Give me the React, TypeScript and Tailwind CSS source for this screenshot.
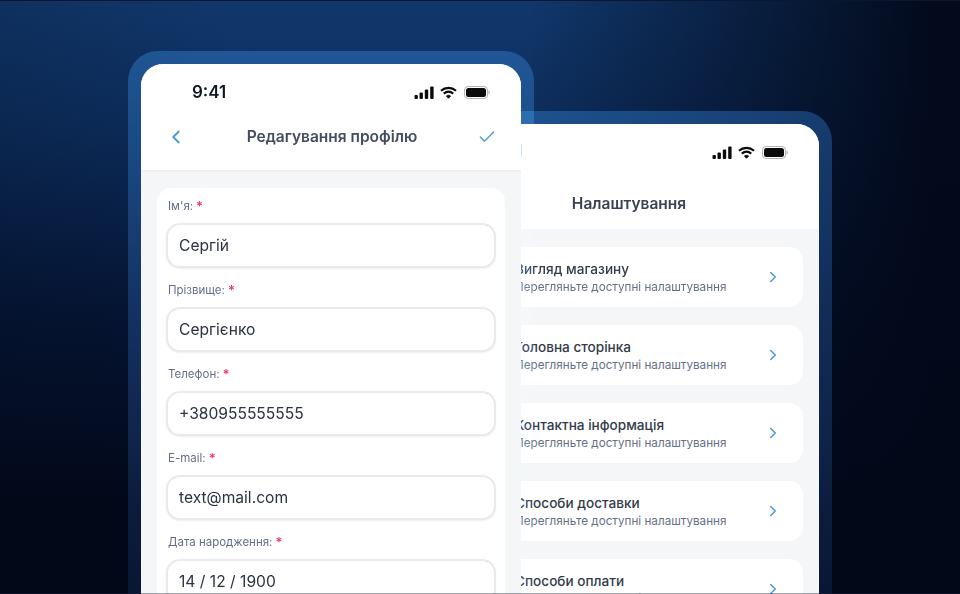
import { ChevronLeft, ChevronRight, Check } from "lucide-react";

const font = "font-['Inter','Liberation_Sans',sans-serif]";

function StatusIcons() {
  return (
    <div className="flex items-center gap-[6px]">
      <svg width="20" height="13" viewBox="0 0 20 13" fill="#0b0b0b">
        <rect x="0.500" y="9" width="3.400" height="4" rx="1" />
        <rect x="5.500" y="6.500" width="3.400" height="6.500" rx="1" />
        <rect x="10.800" y="3.500" width="3.400" height="9.500" rx="1" />
        <rect x="16.200" y="0.500" width="3.400" height="12.500" rx="1" />
      </svg>
      <svg width="17" height="13" viewBox="0 0 18 13" fill="none" stroke="#0b0b0b" strokeWidth="2.300">
        <path d="M1 4.600C5.600.6 12.400.6 17 4.600" />
        <path d="M4 7.700c3-2.500 7-2.500 10 0" />
        <path d="M9 12.600 6.800 10.200c1.300-1 3.100-1 4.400 0Z" fill="#0b0b0b" strokeWidth="1" />
      </svg>
      <svg className="ml-[1px]" width="26" height="13" viewBox="0 0 26 13" fill="none">
        <rect x="0.500" y="0.500" width="23" height="12" rx="3.500" stroke="#0b0b0b" strokeOpacity="0.3" />
        <rect x="2" y="2" width="20" height="9" rx="2.500" fill="#0b0b0b" />
        <path d="M24.500 4.500v4c.8-.3 1.300-1.100 1.300-2s-.5-1.700-1.300-2Z" fill="#0b0b0b" fillOpacity="0.35" />
      </svg>
    </div>
  );
}

function Field({ label, value }: { label: string; value: string }) {
  return (
    <div className="h-[84px]">
      <div className="flex h-[22px] items-center pl-[2px] text-[11.500px] text-[#667085]">
        {label}
        <span className="ml-[3px] text-[13px] font-semibold text-[#e8386a]">*</span>
      </div>
      <div className="mt-[5px] flex h-[45px] items-center rounded-[14px] border-2 border-[#e8eaee] bg-white pl-[11px] text-[15.600px] text-[#2b3240] shadow-[0_1px_2px_rgba(16,24,40,0.07)]">
        {value}
      </div>
    </div>
  );
}

function SettingsRow({ title }: { title: string }) {
  return (
    <div className="flex h-[60px] items-center justify-between rounded-[14px] bg-white pl-[62px] pr-[21px]">
      <div>
        <div className="text-[13.600px] leading-[18px] font-medium text-[#333b4a]">{title}</div>
        <div className="mt-[1px] text-[11.700px] leading-[16px] text-[#667085]">Перегляньте доступні налаштування</div>
      </div>
      <ChevronRight className="h-[18px] w-[18px] text-[#4a9ad0]" strokeWidth={2} />
    </div>
  );
}

function Frame() {
  return (
    <div className="absolute inset-0 rounded-[30px] bg-[linear-gradient(180deg,#122c50_0%,#0f2442_30%,#0b1b32_60%,#050a14_100%)] mix-blend-screen" />
  );
}

export default function App() {
  return (
    <div className={`relative h-[594px] w-[960px] overflow-hidden bg-[#020818] ${font}`}>
      <div className="absolute inset-0 bg-[linear-gradient(180deg,#11386c_0%,#0c2c5a_22%,#051534_52%,#020818_85%)]" />
      <div className="absolute inset-0 bg-[linear-gradient(90deg,rgba(2,8,24,0.15)_0%,rgba(2,8,24,0)_25%,rgba(2,8,24,0)_55%,rgba(2,8,24,0.95)_97%)]" />
      <div className="absolute left-0 right-0 top-0 h-px bg-[#0a1730]" />

      {/* settings phone */}
      <div className="absolute left-[424px] top-[111px] h-[560px] w-[408px]">
        <Frame />
        <div className="relative m-[13px] h-[534px] overflow-hidden rounded-[22px] bg-[#f4f6f8]">
          <div className="h-[105px] bg-white">
            <div className="flex h-[56px] items-center justify-between pl-[51px] pr-[31px]">
              <span className="text-[17px] font-semibold text-[#111827]">9:41</span>
              <StatusIcons />
            </div>
            <div className="pl-[2px] pt-[12px] text-center text-[15.500px] font-semibold text-[#3a4252]">Налаштування</div>
          </div>
          <div className="flex flex-col gap-[18px] px-[16px] pt-[18px]">
            <SettingsRow title="Вигляд магазину" />
            <SettingsRow title="Головна сторінка" />
            <SettingsRow title="Контактна інформація" />
            <SettingsRow title="Способи доставки" />
            <SettingsRow title="Способи оплати" />
          </div>
        </div>
      </div>

      {/* edit phone */}
      <div className="absolute left-[128px] top-[51px] h-[620px] w-[406px]">
        <Frame />
        <div className="relative m-[13px] h-[594px] overflow-hidden rounded-[22px] bg-[#f4f6f8]">
          <div className="h-[106px] bg-white shadow-[0_1px_3px_rgba(16,24,40,0.05)]">
            <div className="flex h-[56px] items-center justify-between pl-[51px] pr-[31px] pt-[1px]">
              <span className="text-[17px] font-semibold text-[#111827]">9:41</span>
              <StatusIcons />
            </div>
            <div className="flex items-center justify-between pl-[24px] pr-[24px] pt-[5px]">
              <ChevronLeft className="h-[22px] w-[22px] text-[#4a9ad0]" strokeWidth={2} />
              <span className="text-[15.500px] font-semibold text-[#434c5e]">Редагування профілю</span>
              <Check className="h-[20px] w-[20px] text-[#4a9ad0]" strokeWidth={1.600} />
            </div>
          </div>
          <div className="px-[16px] pt-[18px]">
            <div className="h-[460px] rounded-[14px] bg-white px-[9px] pt-[8px]">
              <Field label="Ім'я:" value="Сергій" />
              <Field label="Прізвище:" value="Сергієнко" />
              <Field label="Телефон:" value="+380955555555" />
              <Field label="E-mail:" value="text@mail.com" />
              <Field label="Дата народження:" value="14 / 12 / 1900" />
            </div>
          </div>
        </div>
      </div>

      <div className="absolute bottom-0 left-0 right-0 h-px bg-[#20283a]/40" />
    </div>
  );
}
